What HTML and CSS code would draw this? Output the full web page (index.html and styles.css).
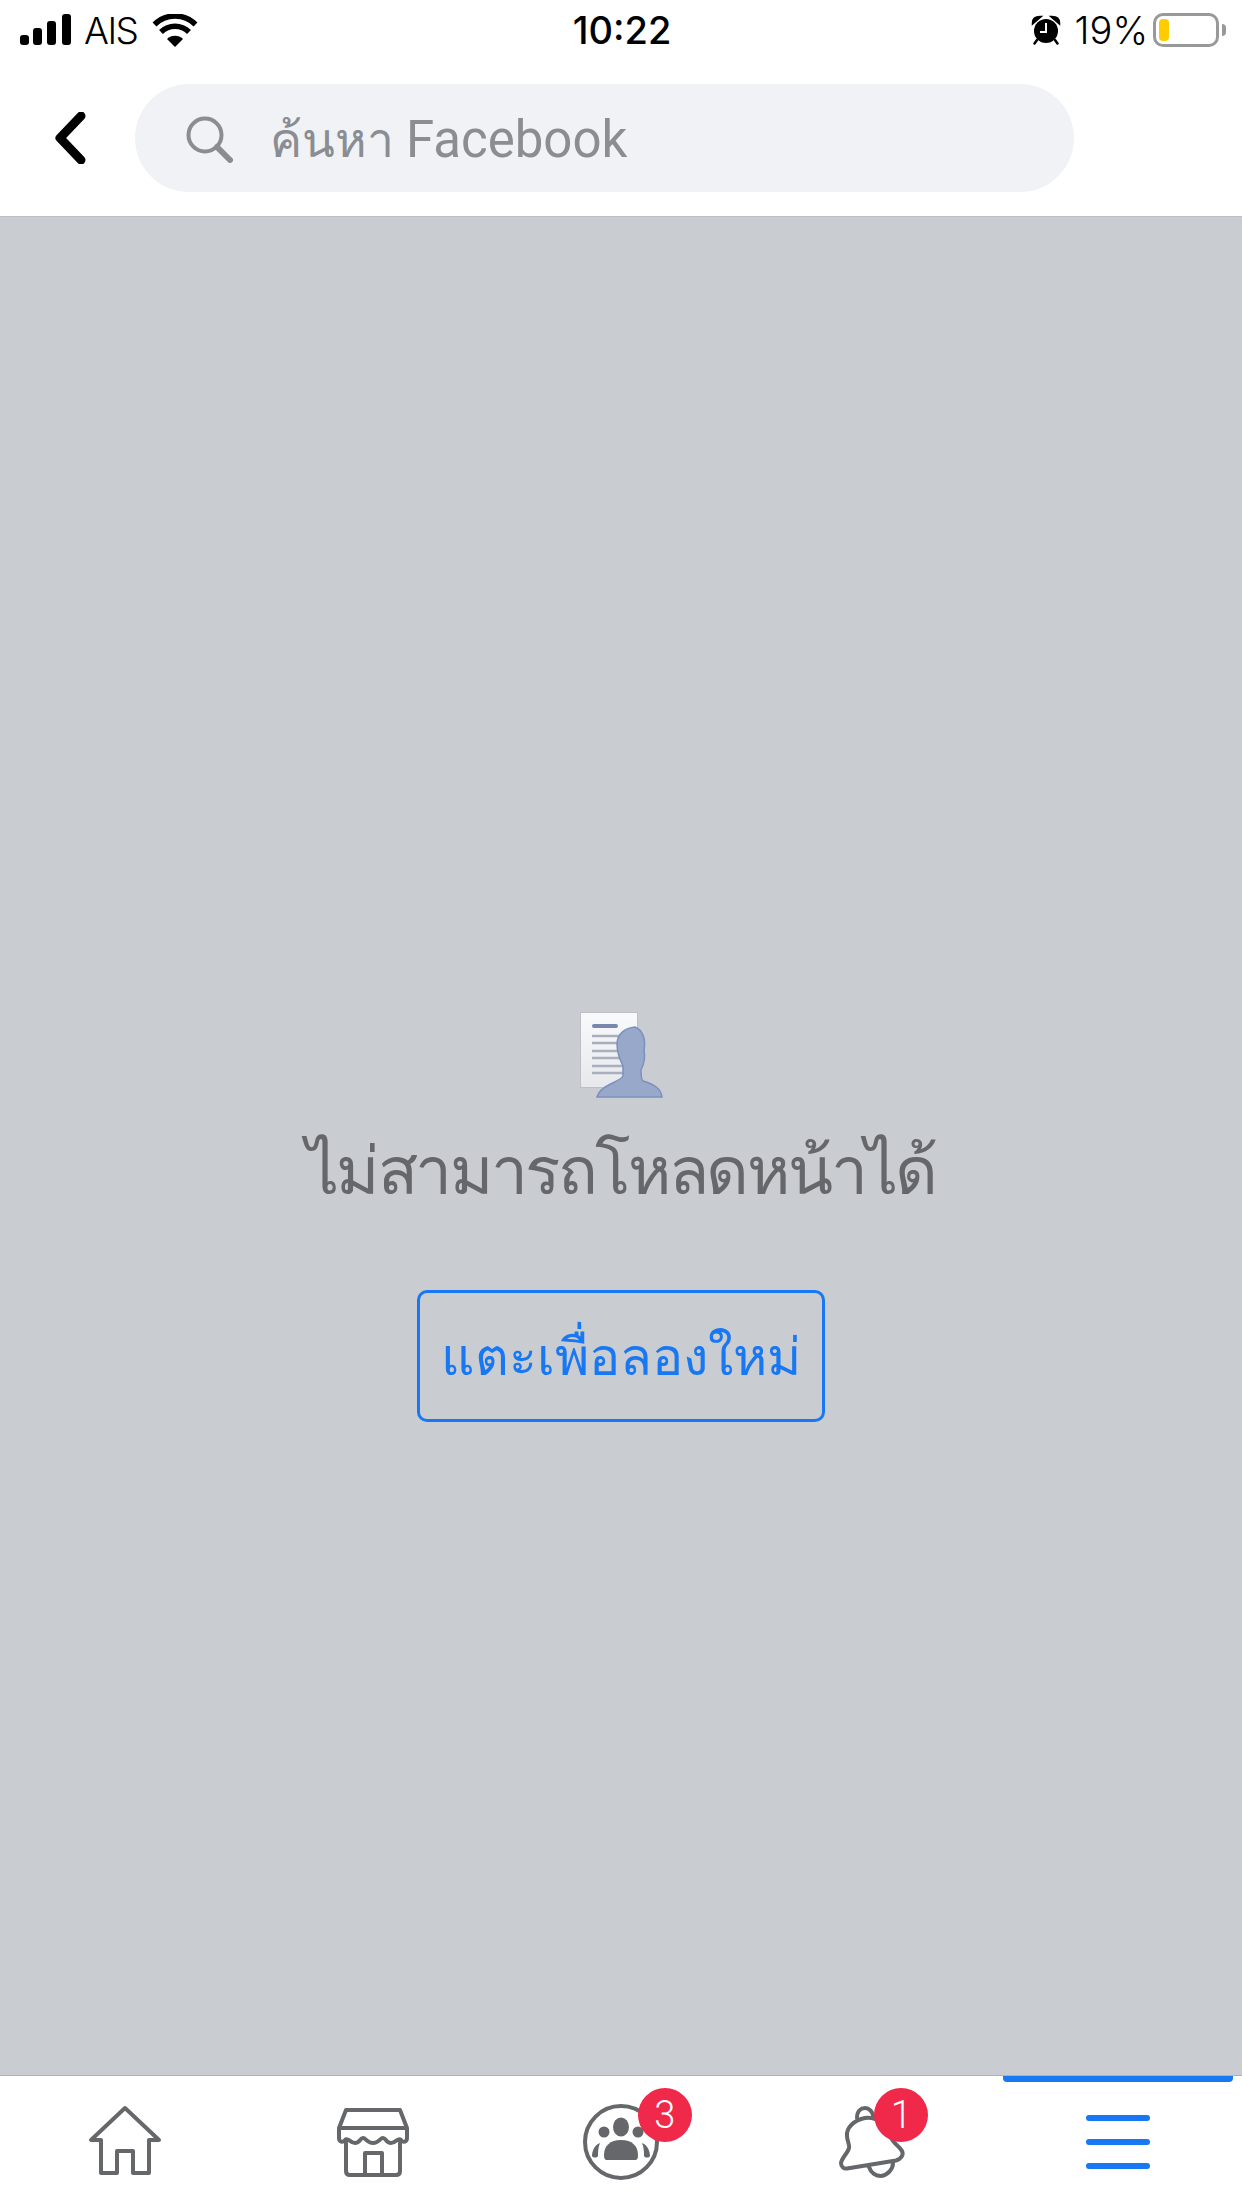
FILE: index.html
```html
<!DOCTYPE html>
<html lang="th">
<head>
<meta charset="utf-8">
<title>Facebook</title>
<link rel="stylesheet" href="styles.css">
</head>
<body>
<div class="app">
  <header class="top">
    <div class="status">
      <div class="status-left">
        <svg class="signal" width="51" height="31" viewBox="0 0 51 31"><rect x="0" y="21" width="9" height="10" rx="3"/><rect x="13" y="14" width="9" height="17" rx="3"/><rect x="27" y="7" width="9" height="24" rx="3"/><rect x="42" y="0" width="9" height="31" rx="3"/></svg>
        <span class="carrier">AIS</span>
        <svg class="wifi" width="46" height="33" viewBox="0 0 46 33"><path d="M23 33 15 25A11.500 11.500 0 0 1 31 25Z"/><path class="wifi-arc" d="M9 18A20 20 0 0 1 37 18"/><path class="wifi-arc" d="M2.500 10.500A29 29 0 0 1 43.500 10.500"/></svg>
      </div>
      <div class="clock">10:22</div>
      <div class="status-right">
        <svg class="alarm" width="30" height="30" viewBox="0 0 30 30"><circle cx="15" cy="16" r="12"/><path d="M2 8C2 4 5 2 9 2ZM28 8C28 4 25 2 21 2ZM6 25 3.500 28.500M24 25 26.500 28.500" class="alarm-ear"/><path class="alarm-hand" d="M15 8V17H9"/></svg>
        <span class="battery-pct">19%</span>
        <div class="battery"><div class="battery-body"><div class="battery-fill"></div></div><div class="battery-tip"></div></div>
      </div>
    </div>
    <div class="searchrow">
      <svg class="back" width="32" height="52" viewBox="0 0 32 52"><path d="M27 4 6 26 27 48"/></svg>
      <div class="search">
        <svg class="mag" width="48" height="48" viewBox="0 0 48 48"><circle cx="20" cy="20" r="16.500"/><path d="M32 32 45 45" class="mag-handle"/></svg>
        <span class="search-text">ค้นหา <span class="search-latin">Facebook</span></span>
      </div>
    </div>
  </header>

  <main class="content">
    <svg class="error-icon" width="88" height="90" viewBox="0 0 88 90">
      <defs><linearGradient id="paper" x1="0" y1="0" x2="0" y2="1"><stop offset="0" stop-color="#f9fafb"/><stop offset="1" stop-color="#e6e8ec"/></linearGradient></defs>
      <rect x="3.500" y="2.500" width="57" height="75" fill="url(#paper)" stroke="#bcbfc6"/>
      <rect x="15" y="14" width="26" height="4" rx="2" fill="#7788ad"/>
      <path d="M15 26H48M15 33H48M15 41H48M15 48H48M15 56H48M15 63H48" stroke="#a9afbd" stroke-width="2.500"/>
      <path d="M58 17C48 18 40 24 40 34C40 42 43 50 46 56L46 66C42 73 24 74 20 87L85 87C84 78 76 74 66 71C64 70 64 64 64 60C68 52 68 45 67 40C69 30 66 20 58 17Z" fill="#98a8cb" stroke="#7c90bc" stroke-width="1.500"/>
    </svg>
    <h1 class="title">ไม่สามารถโหลดหน้าได้</h1>
    <button class="retry" type="button">แตะเพื่อลองใหม่</button>
  </main>

  <nav class="tabs">
    <div class="tab tab-home">
      <svg class="tab-icon" width="76" height="72" viewBox="0 0 76 72"><path d="M37 3 3 35H13V68H29V46H45V68H61V35H71Z"/></svg>
    </div>
    <div class="tab">
      <svg class="tab-icon" width="76" height="72" viewBox="0 0 76 72"><path d="M11 4H65L72 22H4ZM4 22V32C4 36 8 37 10 34C13 31 15 37 20 37C25 37 25 32 28 32C31 32 32 37 38 37C44 37 45 32 48 32C51 32 51 37 56 37C61 37 63 31 66 34C68 37 72 36 72 32V22M11 37V65C11 68 13 69 15 69H61C63 69 65 68 65 65V37M30 69V47H47V69"/></svg>
    </div>
    <div class="tab tab-groups">
      <svg class="tab-icon groups" width="80" height="80" viewBox="0 0 80 80"><circle class="ring" cx="40" cy="40" r="36"/><ellipse class="solid" cx="40" cy="25" rx="8" ry="9.500"/><circle class="solid" cx="23" cy="30" r="5.500"/><circle class="solid" cx="57" cy="30" r="5.500"/><path class="solid" d="M23 53C23 44 29 38 40 38C51 38 57 44 57 53C57 57 56 58 54 58H26C24 58 23 57 23 53Z"/><path class="solid" d="M19 41C13 43 11 50 11 54C12 56 16 56 17 54C17 50 17 46 19 41ZM61 41C67 43 69 50 69 54C68 56 64 56 63 54C63 50 63 46 61 41Z"/></svg>
      <span class="badge">3</span>
    </div>
    <div class="tab tab-bell">
      <svg class="tab-icon" width="72" height="78" viewBox="0 0 72 78"><path d="M29 15C18 17 10 25 11 33C11 38 14 42 13 45C12 50 6 54 5 60C5 64 8 66 11 65.500L60 57.500C65 56 68 52 66 48C63 42 56 40 55 34C53 25 42 13 29 15ZM33 64C35 70 40 73 45 73C52 72 57 66 57 60M21 15C21 8 25 5 29 5C33 5 37 9 37 13"/></svg>
      <span class="badge">1</span>
    </div>
    <div class="tab tab-active">
      <div class="burger"><span></span><span></span><span></span></div>
    </div>
  </nav>
</div>
</body>
</html>
```

FILE: styles.css
```css
* { box-sizing: border-box; }
html, body { margin: 0; padding: 0; }
body { font-family: "Noto Sans", Roboto, sans-serif; background: #fff; }

.app { width: 1242px; height: 2208px; display: flex; flex-direction: column; overflow: hidden; }

.top { height: 217px; background: #fff; border-bottom: 1px solid #bdc0c5; flex: none; }

.status { height: 60px; display: grid; grid-template-columns: 1fr auto 1fr; align-items: center; padding: 0 16px 0 20px; color: #000; font-family: Inter, sans-serif; }
.status-left { display: flex; align-items: center; }
.signal { fill: #000; margin-top: -1px; }
.carrier { font-size: 37px; font-weight: 300; margin-left: 13px; letter-spacing: -1.500px; }
.wifi { margin-left: 14px; fill: #000; }
.wifi-arc { fill: none; stroke: #000; stroke-width: 5.500; }
.clock { font-size: 38px; font-weight: 500; letter-spacing: 0; margin-left: -2px; }
.status-right { display: flex; align-items: center; justify-content: flex-end; }
.alarm { margin-right: 1px; }
.alarm-ear { fill: #000; stroke: #000; stroke-width: 2.500; stroke-linecap: round; }
.alarm-hand { fill: none; stroke: #fff; stroke-width: 2; }
.battery-pct { font-size: 38px; font-weight: 300; margin-left: 13px; letter-spacing: 0; }
.battery { display: flex; align-items: center; margin-left: 5px; }
.battery-body { width: 66px; height: 34px; border: 3px solid #999; border-radius: 10px; padding: 3px; background: #fff; }
.battery-fill { width: 10px; height: 100%; background: #fc0; border-radius: 4px; }
.battery-tip { width: 4px; height: 12px; margin-left: 3px; background: #999; border-radius: 0 4px 4px 0; }

.searchrow { display: flex; align-items: center; padding: 24px 0 0 55px; }
.back { fill: none; stroke: #000; stroke-width: 9; stroke-linecap: round; stroke-linejoin: round; flex: none; margin-left: -1px; margin-right: -3px; }
.search { width: 939px; height: 108px; margin-left: 52px; border-radius: 54px; background: #f0f2f5; display: flex; align-items: center; padding-left: 50px; }
.mag { fill: none; stroke: #8a8d91; stroke-width: 4; flex: none; margin-top: 2px; }
.mag-handle { stroke-width: 6; stroke-linecap: round; }
.search-text { margin: 3px 0 0 37px; font-size: 48px; color: #8a8d91; font-family: Roboto, "Noto Sans", sans-serif; }
.search-latin { font-size: 51px; }

.content { flex: 1; background: #c9ccd1; display: flex; flex-direction: column; align-items: center; padding-top: 793px; }
.error-icon { display: block; margin-left: 0; }
.title { margin: 26px 0 0; font-size: 66px; font-weight: 500; line-height: 84px; letter-spacing: -2.600px; color: #65676b; }
.retry { margin-top: 80px; width: 408px; height: 132px; border: 3px solid #1877f2; border-radius: 10px; background: transparent; color: #1877f2; font: 500 52px "Noto Sans", Roboto, sans-serif; padding: 0; }

.tabs { height: 133px; flex: none; background: #fff; border-top: 1px solid #aeb0b4; display: grid; grid-template-columns: repeat(5, 1fr); }
.tab { position: relative; display: flex; align-items: center; justify-content: center; }
.tab-icon { fill: none; stroke: #65676b; stroke-width: 4; stroke-linejoin: round; stroke-linecap: round; }
.tab-home .tab-icon { margin-left: 3px; margin-top: -2px; }
.tab-bell .tab-icon { margin-left: 6px; }
.groups .solid { fill: #65676b; stroke: none; }
.badge { position: absolute; top: 12px; width: 54px; height: 54px; border-radius: 50%; background: #f02849; color: #fff; font: 300 38px/54px Roboto, sans-serif; text-align: center; }
.tab-groups .badge { left: 141px; }
.tab-bell .badge { left: 129px; }
.tab-active::before { content: ""; position: absolute; top: 0; left: 9px; right: 9px; height: 6px; background: #1877f2; border-radius: 0 0 4px 4px; }
.burger { display: flex; flex-direction: column; gap: 18px; width: 64px; }
.burger span { height: 6px; background: #1877f2; border-radius: 3px; }
```
